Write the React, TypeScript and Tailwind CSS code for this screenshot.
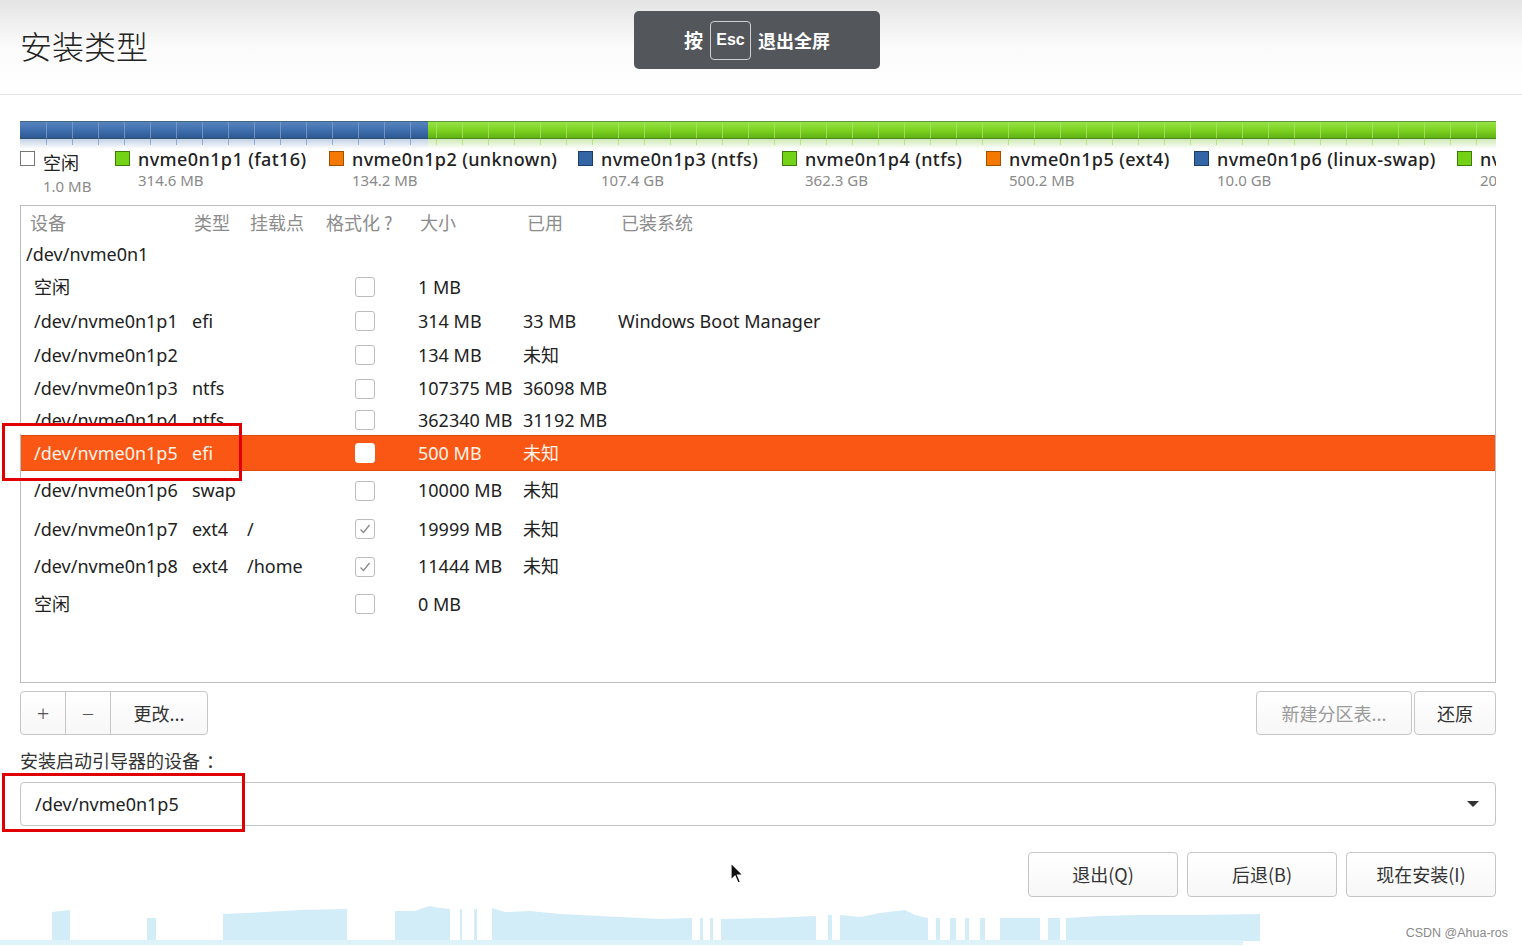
import React from 'react';

const latin = "font-['Noto_Sans','Noto_Sans_CJK_SC',sans-serif]";

interface Row {
  dev: string;
  type?: string;
  mount?: string;
  fmt?: boolean;
  size: string;
  used?: string;
  sys?: string;
  h: string;
  selected?: boolean;
}

const rows: Row[] = [
  { dev: '空闲', size: '1 MB', h: 'h-[34px]' },
  { dev: '/dev/nvme0n1p1', type: 'efi', size: '314 MB', used: '33 MB', sys: 'Windows Boot Manager', h: 'h-[34px]' },
  { dev: '/dev/nvme0n1p2', size: '134 MB', used: '未知', h: 'h-[34px]' },
  { dev: '/dev/nvme0n1p3', type: 'ntfs', size: '107375 MB', used: '36098 MB', h: 'h-[33px]' },
  { dev: '/dev/nvme0n1p4', type: 'ntfs', size: '362340 MB', used: '31192 MB', h: 'h-[30px]' },
  { dev: '/dev/nvme0n1p5', type: 'efi', size: '500 MB', used: '未知', h: 'h-[36px]', selected: true },
  { dev: '/dev/nvme0n1p6', type: 'swap', size: '10000 MB', used: '未知', h: 'h-[39px]' },
  { dev: '/dev/nvme0n1p7', type: 'ext4', mount: '/', fmt: true, size: '19999 MB', used: '未知', h: 'h-[38px]' },
  { dev: '/dev/nvme0n1p8', type: 'ext4', mount: '/home', fmt: true, size: '11444 MB', used: '未知', h: 'h-[37px]' },
  { dev: '空闲', size: '0 MB', h: 'h-[38px]' },
];

const legend = [
  { name: '空闲', size: '1.0 MB', sq: 'bg-white border-[#777]', w: 'w-[95px]', free: true },
  { name: 'nvme0n1p1 (fat16)', size: '314.6 MB', sq: 'bg-[#73d216] border-[#3e7a0a]', w: 'w-[214px]' },
  { name: 'nvme0n1p2 (unknown)', size: '134.2 MB', sq: 'bg-[#f57900] border-[#a04f00]', w: 'w-[249px]' },
  { name: 'nvme0n1p3 (ntfs)', size: '107.4 GB', sq: 'bg-[#3465a4] border-[#1c3d6a]', w: 'w-[204px]' },
  { name: 'nvme0n1p4 (ntfs)', size: '362.3 GB', sq: 'bg-[#73d216] border-[#3e7a0a]', w: 'w-[204px]' },
  { name: 'nvme0n1p5 (ext4)', size: '500.2 MB', sq: 'bg-[#f57900] border-[#a04f00]', w: 'w-[208px]' },
  { name: 'nvme0n1p6 (linux-swap)', size: '10.0 GB', sq: 'bg-[#3465a4] border-[#1c3d6a]', w: 'w-[263px]' },
  { name: 'nvme0n1p7 (ext4)', size: '20.0 GB', sq: 'bg-[#73d216] border-[#3e7a0a]', w: 'w-[220px]' },
];

function Check({ on, white }: { on?: boolean; white?: boolean }) {
  return (
    <div
      className={`w-[20px] h-[20px] rounded-[3px] border flex items-center justify-center ${
        white ? 'bg-white border-[#fff]' : 'bg-white border-[#bdbdbd]'
      }`}
    >
      {on && (
        <svg width="14" height="14" viewBox="0 0 14 14">
          <path d="M2.5 7.5 L5.5 10.5 L11.5 3" fill="none" stroke="#8a8a8a" strokeWidth="1.3" />
        </svg>
      )}
    </div>
  );
}

function PartitionBar() {
  const W = 1476;
  const blue = 408;
  const ticks = [];
  for (let x = 26; x < W; x += 26) ticks.push(x);
  return (
    <svg width={W} height="30" className="block">
      <defs>
        <linearGradient id="gb" x1="0" y1="0" x2="0" y2="1">
          <stop offset="0" stopColor="#5a86c0" />
          <stop offset="0.5" stopColor="#3f6fae" />
          <stop offset="1" stopColor="#2d5590" />
        </linearGradient>
        <linearGradient id="gg" x1="0" y1="0" x2="0" y2="1">
          <stop offset="0" stopColor="#9ae34a" />
          <stop offset="0.5" stopColor="#7dd321" />
          <stop offset="1" stopColor="#5fae12" />
        </linearGradient>
        <linearGradient id="gr" x1="0" y1="0" x2="0" y2="1">
          <stop offset="0" stopColor="#cfe9b5" />
          <stop offset="1" stopColor="#ffffff" />
        </linearGradient>
        <linearGradient id="grb" x1="0" y1="0" x2="0" y2="1">
          <stop offset="0" stopColor="#c3d2e6" />
          <stop offset="1" stopColor="#ffffff" />
        </linearGradient>
      </defs>
      <rect x="0" y="0" width={blue} height="18" fill="url(#gb)" />
      <rect x={blue} y="0" width={W - blue} height="18" fill="url(#gg)" />
      <rect x="0" y="18" width={blue} height="10" fill="url(#grb)" />
      <rect x={blue} y="18" width={W - blue} height="10" fill="url(#gr)" />
      {ticks.map((x) => (
        <line
          key={x}
          x1={x + 0.5}
          y1="1"
          x2={x + 0.5}
          y2="24"
          stroke={x < blue ? '#7f9fcc' : '#a8e46a'}
          strokeWidth="1"
          opacity="0.8"
        />
      ))}
      <line x1="0" y1="0.5" x2={W} y2="0.5" stroke="#2a4a3a" strokeOpacity="0.5" />
      <line x1="0" y1="17.5" x2={W} y2="17.5" stroke="#2a4a3a" strokeOpacity="0.4" />
    </svg>
  );
}

function Wave() {
  const pts =
    '0,938 52,938 52,909 70,907 70,938 147,938 147,915 156,915 156,938 223,938 223,911 265,909 300,907 347,906 347,938 395,938 395,908 415,908 429,903 440,905 450,906 450,938 460,938 460,906 462,906 462,938 474,938 474,906 477,906 477,938 492,938 492,905 505,909 530,908 560,911 620,914 660,916 692,915 692,938 700,938 700,915 703,915 703,938 710,938 710,915 713,915 713,938 721,938 721,916 770,915 816,913 816,938 828,938 828,912 832,912 832,938 840,938 840,912 860,914 880,910 905,907 915,912 928,915 928,938 936,938 936,915 940,915 940,938 950,938 950,915 956,915 956,938 965,938 965,915 969,915 969,938 980,938 980,915 985,915 985,938 1000,938 1000,915 1040,915 1040,938 1048,938 1048,915 1060,915 1060,938 1066,938 1066,915 1100,913 1140,912 1200,912 1260,911 1260,938';
  return (
    <svg width="1522" height="45" viewBox="0 900 1522 45" className="block">
      <polygon points={pts} fill="#d3edf8" />
      <rect x="0" y="937" width="1243" height="5" fill="#def2fa" />
    </svg>
  );
}

function Cursor() {
  return (
    <svg width="16" height="24" viewBox="0 0 16 24" className="absolute left-[730px] top-[862px]">
      <path d="M1 1 L1 18 L5 14 L8 21 L10.5 20 L7.5 13 L13 13 Z" fill="#111" stroke="#fff" strokeWidth="1.2" />
    </svg>
  );
}

export default function App() {
  return (
    <div className={`relative w-[1522px] h-[947px] overflow-hidden bg-white text-[#333] ${latin}`}>
      {/* header */}
      <div className="h-[95px] bg-gradient-to-b from-[#e4e4e4] via-[#fbfbfb] to-white border-b border-[#e2e2e2] flex items-center pl-[20px] pb-[4px]">
        <div className="text-[32px] leading-none text-[#222] font-['Noto_Sans_CJK_SC',sans-serif] font-light">安装类型</div>
      </div>

      <div className="pl-[20px] pr-[26px] pt-[26px]">
        <PartitionBar />

        {/* legend */}
        <div className="flex w-[1476px] overflow-hidden -mt-[3px] h-[57px]">
          {legend.map((l) => (
            <div key={l.name} className={`${l.w} shrink-0 flex`}>
              <div className={`w-[15px] h-[15px] border mt-[3px] shrink-0 ${l.sq}`} />
              <div className="ml-[8px] whitespace-nowrap">
                <div
                  className={
                    l.free
                      ? "text-[18px] leading-[22px] mt-[3px] text-[#222] font-['Noto_Sans_CJK_SC',sans-serif]"
                      : 'text-[18px] leading-[22px] text-[#222] font-medium tracking-[0.4px]'
                  }
                >
                  {l.name}
                </div>
                <div className={`text-[15px] leading-[18px] text-[#8a8a8a] ${l.free ? 'mt-[4px]' : 'mt-[1px]'}`}>
                  {l.size}
                </div>
              </div>
            </div>
          ))}
        </div>

        {/* table */}
        <div className="border border-[#bcbcbc] h-[478px] bg-white">
          <div className="grid grid-cols-[164px_56px_76px_94px_107px_94px_1fr] pl-[9px] h-[33px] items-center text-[18px] text-[#8c8c8c] font-['Noto_Sans_CJK_SC',sans-serif]">
            <div>设备</div>
            <div>类型</div>
            <div>挂载点</div>
            <div>格式化 ?</div>
            <div>大小</div>
            <div>已用</div>
            <div>已装系统</div>
          </div>
          <div className="h-[31px] flex items-center pl-[5px] text-[18px] text-[#222]">/dev/nvme0n1</div>
          {rows.map((r, i) => (
            <div
              key={i}
              className={`grid grid-cols-[158px_55px_108px_63px_105px_95px_1fr] pl-[13px] items-center text-[18px] whitespace-nowrap ${r.h} ${
                r.selected ? 'bg-[#fa5614] text-[#fff4ea] border-y border-[#dd4a0c]' : 'text-[#222]'
              }`}
            >
              <div>{r.dev}</div>
              <div>{r.type}</div>
              <div>{r.mount}</div>
              <div>
                <Check on={r.fmt} white={r.selected} />
              </div>
              <div>{r.size}</div>
              <div>{r.used}</div>
              <div>{r.sys}</div>
            </div>
          ))}
        </div>

        {/* buttons row */}
        <div className="flex justify-between mt-[8px] h-[44px]">
          <div className="flex border border-[#c6c6c6] rounded-[4px] bg-gradient-to-b from-white to-[#f7f7f7] text-[18px]">
            <div className="w-[45px] flex items-center justify-center text-[#555] border-r border-[#c6c6c6] text-[22px] font-light">+</div>
            <div className="w-[45px] flex items-center justify-center text-[#555] border-r border-[#c6c6c6] text-[22px] font-light">−</div>
            <div className="w-[96px] flex items-center justify-center text-[#333] font-['Noto_Sans_CJK_SC',sans-serif]">更改...</div>
          </div>
          <div className="flex gap-[2px] text-[18px] font-['Noto_Sans_CJK_SC',sans-serif]">
            <div className="w-[156px] flex items-center justify-center border border-[#c6c6c6] rounded-[4px] text-[#9a9a9a] bg-gradient-to-b from-white to-[#f7f7f7]">新建分区表...</div>
            <div className="w-[82px] flex items-center justify-center border border-[#c6c6c6] rounded-[4px] text-[#333] bg-gradient-to-b from-white to-[#f7f7f7]">还原</div>
          </div>
        </div>

        <div className="mt-[13px] text-[18px] leading-[24px] text-[#333] font-['Noto_Sans_CJK_SC',sans-serif] flex">
          <span>安装启动引导器的设备</span>
          <span className="ml-[6px]">：</span>
        </div>

        <div className="mt-[10px] h-[44px] border border-[#c6c6c6] rounded-[4px] flex items-center justify-between pl-[14px] pr-[16px] bg-white">
          <div className="text-[18px] text-[#222]">/dev/nvme0n1p5</div>
          <svg width="12" height="8" viewBox="0 0 12 8">
            <path d="M0 1 L12 1 L6 7 Z" fill="#333" />
          </svg>
        </div>

        <div className="flex justify-end gap-[9px] mt-[26px] font-['Noto_Sans_CJK_SC',sans-serif] text-[18px]">
          <div className="w-[150px] h-[45px] flex items-center justify-center border border-[#c6c6c6] rounded-[4px] bg-gradient-to-b from-white to-[#f7f7f7]">退出(Q)</div>
          <div className="w-[150px] h-[45px] flex items-center justify-center border border-[#c6c6c6] rounded-[4px] bg-gradient-to-b from-white to-[#f7f7f7]">后退(B)</div>
          <div className="w-[150px] h-[45px] flex items-center justify-center border border-[#c6c6c6] rounded-[4px] bg-gradient-to-b from-white to-[#f7f7f7]">现在安装(I)</div>
        </div>

        <div className="-ml-[20px] -mr-[26px] mt-[6px]">
          <Wave />
        </div>
      </div>

      {/* overlays */}
      <div className="absolute left-[634px] top-[11px] w-[246px] h-[58px] bg-[#53565b] rounded-[5px] flex items-center justify-center gap-[7px] text-white font-bold font-['Noto_Sans_CJK_SC',sans-serif]">
        <span className="text-[19px]">按</span>
        <span className="w-[41px] h-[39px] border border-[#d0d0d0] rounded-[4px] flex items-center justify-center text-[16px] font-['Liberation_Sans',sans-serif]">Esc</span>
        <span className="text-[18px]">退出全屏</span>
      </div>

      <div className="absolute left-[2px] top-[423px] w-[240px] h-[58px] border-[3px] border-[#e00000]">
        <div className="h-[8px] bg-white" />
      </div>
      <div className="absolute left-[2px] top-[773px] w-[243px] h-[59px] border-[3px] border-[#e00000]" />

      <div className="absolute right-[14px] top-[924px] text-[12.5px] text-[#8a8a8a] font-['Liberation_Sans',sans-serif]">CSDN @Ahua-ros</div>

      <Cursor />
    </div>
  );
}
